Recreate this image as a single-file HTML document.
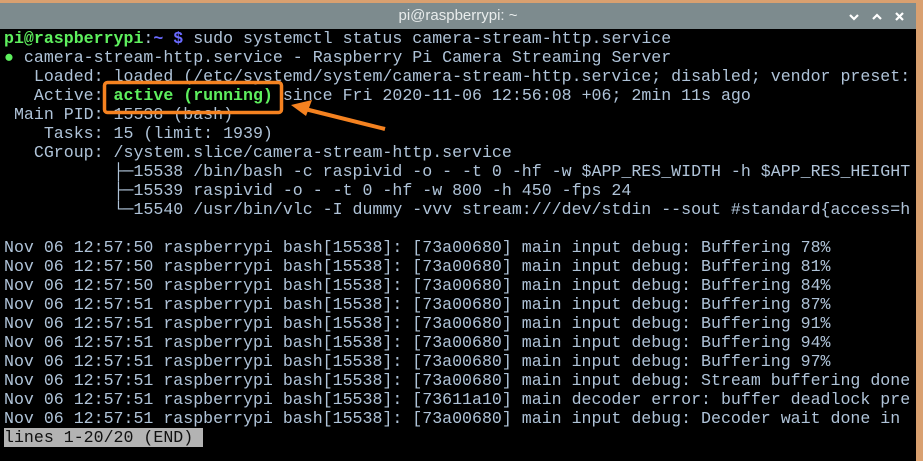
<!DOCTYPE html>
<html><head><meta charset="utf-8"><style>
html,body{margin:0;padding:0;width:923px;height:461px;overflow:hidden;background:#d9a070;}
.win{position:absolute;left:0;top:3px;width:916px;height:458px;background:#000;}
.title{height:26px;background:#7d8b8e;color:#e8ecec;font:15px "Liberation Sans",sans-serif;text-align:center;line-height:26px;position:relative}
.ctl{position:absolute;top:0;right:4px;font:bold 14px "DejaVu Sans",sans-serif;color:#fff;}
pre{margin:0;padding:0 0 0 4px;font:16.6px/19px "Liberation Mono","DejaVu Sans Mono",monospace;color:#afc3d8;white-space:pre;}
.g{color:#5ef05e;font-weight:bold}.b{color:#6a6aff;font-weight:bold}
.ga{color:#5ef05e;font-weight:bold}
.end{background:#b3b3b3;color:#111}
</style></head><body>
<div class="win">
<div class="title">pi@raspberrypi: ~
<svg class="ctl" width="110" height="26" viewBox="0 0 110 26"><g stroke="#fff" stroke-width="2.2" fill="none"><path d="M48 12l4 4 4-4"/><path d="M71 16l4-4 4 4"/><path d="M94 10l7 7M101 10l-7 7"/></g></svg></div>
<pre><span class="g">pi@raspberrypi</span>:<span class="b">~ $</span> sudo systemctl status camera-stream-http.service
<span style="color:#5ef05e">●</span> camera-stream-http.service - Raspberry Pi Camera Streaming Server
   Loaded: loaded (/etc/systemd/system/camera-stream-http.service; disabled; vendor preset:
   Active: <span class="ga">active (running)</span> since Fri 2020-11-06 12:56:08 +06; 2min 11s ago
 Main PID: 15538 (bash)
    Tasks: 15 (limit: 1939)
   CGroup: /system.slice/camera-stream-http.service
           ├─15538 /bin/bash -c raspivid -o - -t 0 -hf -w $APP_RES_WIDTH -h $APP_RES_HEIGHT
           ├─15539 raspivid -o - -t 0 -hf -w 800 -h 450 -fps 24
           └─15540 /usr/bin/vlc -I dummy -vvv stream:///dev/stdin --sout #standard{access=h

Nov 06 12:57:50 raspberrypi bash[15538]: [73a00680] main input debug: Buffering 78%
Nov 06 12:57:50 raspberrypi bash[15538]: [73a00680] main input debug: Buffering 81%
Nov 06 12:57:50 raspberrypi bash[15538]: [73a00680] main input debug: Buffering 84%
Nov 06 12:57:51 raspberrypi bash[15538]: [73a00680] main input debug: Buffering 87%
Nov 06 12:57:51 raspberrypi bash[15538]: [73a00680] main input debug: Buffering 91%
Nov 06 12:57:51 raspberrypi bash[15538]: [73a00680] main input debug: Buffering 94%
Nov 06 12:57:51 raspberrypi bash[15538]: [73a00680] main input debug: Buffering 97%
Nov 06 12:57:51 raspberrypi bash[15538]: [73a00680] main input debug: Stream buffering done
Nov 06 12:57:51 raspberrypi bash[15538]: [73611a10] main decoder error: buffer deadlock pre
Nov 06 12:57:51 raspberrypi bash[15538]: [73a00680] main input debug: Decoder wait done in
<span class="end">lines 1-20/20 (END) </span></pre>
</div>
<svg style="position:absolute;left:0;top:0" width="923" height="461"><rect x="104.5" y="82.5" width="177" height="30" rx="3" fill="none" stroke="#f58220" stroke-width="3.5"/><line x1="305" y1="109" x2="385" y2="129" stroke="#f58220" stroke-width="4"/><path d="M291 105 L312 100 L306 116 Z" fill="#f58220"/></svg>
</body></html>
